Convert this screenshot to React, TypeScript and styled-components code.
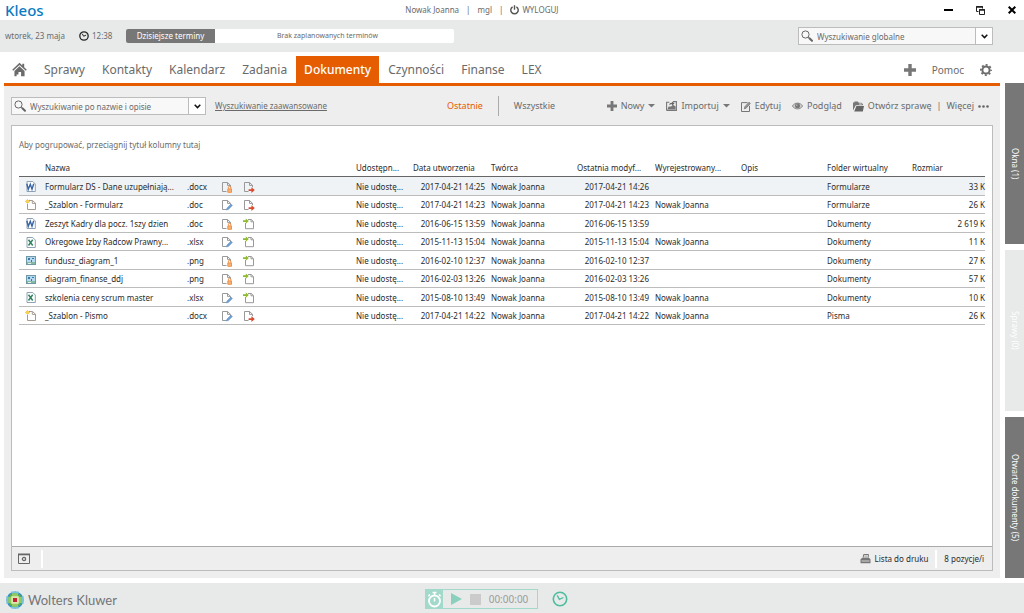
import React from "react";
import styled, { createGlobalStyle, css } from "styled-components";

const color = {
  orange: "#e65c00",
  grey: "#777",
  text: "#6a6a6a",
  ink: "#2b2b2b",
  strip: "#e8eaea",
  work: "#eeeeee",
  line: "#bcbcbc",
  teal: "#4dbd9e",
  tealSoft: "#a3d9ca",
};

const GlobalStyle = createGlobalStyle`
  *, *::before, *::after { box-sizing: border-box; }
  body { margin: 0; background: #fff; color: ${color.text}; font: 8px/12px "Noto Sans", "Open Sans", sans-serif; }
  button, input { font: inherit; color: inherit; }
  button { display: inline-flex; align-items: center; padding: 0; border: 0; background: none; white-space: nowrap; }
  a { color: inherit; text-decoration: none; }
  svg { display: block; flex: none; }
`;

const Page = styled.div`
  display: flex;
  flex-direction: column;
  min-height: 100vh;
`;

const TitleBar = styled.header`
  display: grid;
  grid-template-columns: 7fr auto 8fr;
  align-items: center;
  height: 20px;
  padding: 0 8px 0 5px;
`;

const Brand = styled.span`
  color: #0a7bc1;
  font-size: 15px;
  line-height: 20px;
  font-weight: 500;
`;

const UserInfo = styled.div`
  display: flex;
  align-items: center;
  gap: 7px;
  button { gap: 3px; }
`;

const WindowControls = styled.div`
  display: flex;
  justify-content: flex-end;
  align-items: center;
  gap: 23px;
  color: #000;
`;

const InfoStrip = styled.div`
  display: flex;
  align-items: center;
  height: 32px;
  padding: 0 31px 0 5px;
  background: ${color.strip};
`;

const Today = styled.span`
  width: 74px;
`;

const Clock = styled.span`
  display: flex;
  align-items: center;
  gap: 3px;
  width: 47px;
`;

const Agenda = styled.div`
  display: flex;
  height: 14px;
  line-height: 14px;
  border-radius: 2px;
  overflow: hidden;
  background: #fff;
`;

const AgendaTitle = styled.strong`
  width: 89px;
  background: ${color.grey};
  color: #fff;
  font-weight: 400;
  text-align: center;
`;

const AgendaText = styled.span`
  width: 239px;
  padding-right: 14px;
  font-size: 7px;
  text-align: center;
`;

const SearchBox = styled.div<{ $push?: boolean }>`
  display: flex;
  align-items: center;
  width: 195px;
  height: 18px;
  padding-left: 2px;
  border: 1px solid ${color.line};
  background: #f8f8f8;
  ${(p) => p.$push && css`margin-left: auto;`}

  input {
    flex: 1;
    min-width: 0;
    height: 16px;
    padding: 0 4px;
    border: 0;
    outline: 0;
    background: none;
  }
  input::placeholder { color: ${color.text}; opacity: 1; }
  button {
    justify-content: center;
    width: 17px;
    height: 16px;
    border-left: 1px solid ${color.line};
    background: #fff;
    color: #111;
  }
`;

const Body = styled.div`
  display: flex;
  flex: 1;
  gap: 5px;
  padding: 0 0 5px 4px;
`;

const Main = styled.main`
  display: flex;
  flex: 1;
  flex-direction: column;
  min-width: 0;
`;

const Nav = styled.nav`
  display: flex;
  align-items: flex-end;
  gap: 1px;
  height: 34px;
  padding-right: 8px;
  border-bottom: 3px solid ${color.orange};
`;

const NavLink = styled.a<{ $active?: boolean }>`
  display: flex;
  align-items: center;
  height: 27px;
  padding: 0 8px;
  font-size: 12px;
  line-height: 16px;
  ${(p) => p.$active && css`background: ${color.orange}; color: #fff; font-weight: 500;`}
`;

const NavTools = styled.div`
  display: flex;
  align-items: center;
  gap: 16px;
  height: 27px;
  margin-left: auto;
  font-size: 10px;
`;

const Work = styled.section`
  display: flex;
  flex: 1;
  flex-direction: column;
  padding: 11px 7px 7px;
  background: ${color.work};
`;

const Toolbar = styled.div`
  display: flex;
  align-items: center;
  height: 18px;
  margin-bottom: 10px;
  padding-right: 4px;
`;

const AdvancedLink = styled.a`
  width: 232px;
  margin-left: 9px;
  text-decoration: underline;
`;

const ViewButton = styled.button<{ $active?: boolean }>`
  font-size: 9px;
  ${(p) => p.$active && css`color: ${color.orange};`}
`;

const ViewDivider = styled.span`
  width: 1px;
  height: 20px;
  margin: 0 15px;
  background: #aaa;
`;

const Actions = styled.div`
  display: flex;
  align-items: center;
  gap: 11px;
  margin-left: auto;
  font-size: 9px;
  button { gap: 4px; }
`;

const CaseGroup = styled.div`
  display: flex;
  align-items: center;
  gap: 5px;
`;

const Panel = styled.div`
  display: flex;
  flex: 1;
  flex-direction: column;
  border: 1px solid ${color.line};
  background: #fff;
`;

const PanelBody = styled.div`
  flex: 1;
  padding: 0 7px;
`;

const GroupHint = styled.p`
  margin: 13px 0 8px;
`;

const Table = styled.table`
  width: 100%;
  border-collapse: separate;
  border-spacing: 0;
  table-layout: fixed;
  color: ${color.ink};
  font-size: 8px;
  line-height: 12px;
  white-space: nowrap;
`;

const HeadCell = styled.th`
  height: 18px;
  padding: 0 3px;
  border-bottom: 1px solid #666;
  font-weight: 400;
  text-align: left;
`;

const Row = styled.tr<{ $selected?: boolean }>`
  height: 19px;
  &:nth-child(even) { height: 18px; }
  ${(p) => p.$selected && css`background: #eff3f6;`}
`;

const Cell = styled.td<{ $align?: "right" | "center"; $flush?: boolean }>`
  padding: 1px ${(p) => (p.$flush ? 0 : 3)}px 0;
  border-bottom: 1px solid ${color.line};
  text-align: ${(p) => p.$align ?? "left"};
  svg { margin: 0 auto; }
`;

const PanelFoot = styled.footer`
  display: flex;
  align-items: center;
  height: 24px;
  padding: 0 8px 0 6px;
  border-top: 1px solid #aaa;
  background: ${color.work};
  color: ${color.ink};
`;

const ViewSettings = styled.button`
  padding-right: 4px;
`;

const FootDivider = styled.span`
  width: 2px;
  height: 18px;
  margin: 0 7px;
  background: #fff;
`;

const PrintButton = styled.button`
  gap: 4px;
  margin-left: auto;
`;

const Rail = styled.aside`
  display: flex;
  flex-direction: column;
  gap: 6px;
  width: 19px;
  margin-top: 31px;
`;

const RailTab = styled.button`
  flex: 1;
  justify-content: center;
  background: ${color.grey};
  color: #fff;
  writing-mode: vertical-rl;
  &:disabled { background: ${color.strip}; color: #fff; }
`;

const BottomBar = styled.footer`
  display: grid;
  grid-template-columns: 1fr auto 1fr;
  align-items: center;
  height: 30px;
  padding: 0 37px 0 6px;
  background: ${color.strip};
`;

const Company = styled.div`
  display: flex;
  align-items: center;
  gap: 4px;
  padding-top: 3px;
  font: 13px/18px Lato, "Open Sans", sans-serif;
  color: #737577;
`;

const TimerArea = styled.div`
  display: flex;
  align-items: center;
  gap: 14px;
  padding-top: 2px;
`;

const Timer = styled.div`
  display: flex;
  align-items: center;
  gap: 8px;
  height: 20px;
  padding-right: 9px;
  border: 1px solid ${color.tealSoft};
  color: #9b9b9b;
  font-size: 10px;
`;

const TimerBadge = styled.span`
  display: grid;
  place-items: center;
  width: 17px;
  height: 18px;
  background: ${color.tealSoft};
`;

const Plus = ({ size }: { size: number }) => (
  <svg width={size} height={size} viewBox="0 0 12 12" fill={color.grey}>
    <path d="M4.3 0h3.4v4.3H12v3.4H7.7V12H4.3V7.7H0V4.3h4.3z" />
  </svg>
);

const Magnifier = () => (
  <svg width="12" height="12" viewBox="0 0 12 12" fill="none" stroke="#666">
    <circle cx="4.5" cy="4.5" r="3.6" />
    <path d="M7.3 7.3l1.2 1.2" />
    <path d="M8.4 8.2l2.6 2.6" strokeWidth="2" strokeLinecap="round" />
  </svg>
);

const Chevron = () => (
  <svg width="7" height="5" viewBox="0 0 7 5" fill="none" stroke="currentColor" strokeWidth="1.5">
    <path d="M.7.8l2.8 2.8L6.3.8" />
  </svg>
);

const Caret = () => (
  <svg width="7" height="4" viewBox="0 0 7 4" fill={color.grey}>
    <path d="M0 0h7L3.5 3.6z" />
  </svg>
);

const Power = () => (
  <svg width="9" height="10" viewBox="0 0 9 10" fill="none" stroke="#555" strokeWidth="1.4">
    <path d="M2.6 1.9a3.7 3.7 0 1 0 3.8 0M4.5.2v4.6" />
  </svg>
);

const ClockIcon = ({ size, tint, width = 1.3 }: { size: number; tint: string; width?: number }) => (
  <svg width={size} height={size} viewBox="0 0 16 16" fill="none" stroke={tint} strokeWidth={(width * 16) / size}>
    <circle cx="8" cy="8" r="6.7" />
    <path d="M5.2 4.4L7.4 8.4l4-1.9" strokeWidth={((width - 0.3) * 16) / size} />
  </svg>
);

const House = () => (
  <svg width="15" height="15" viewBox="0 0 16 15" fill="#6b6b6b">
    <path d="M8 .4l3 2.8V1.3h2v3.8l2.8 2.6-1.1 1.2L8 2.7 1.3 8.9.2 7.7z" />
    <path d="M8 4l5.4 5v5.8H9.7v-4.6H6.9v2.5h-2v2.1H2.6V9z" />
  </svg>
);

const Gear = () => (
  <svg width="12" height="12" viewBox="0 0 12 12" fill="none" stroke="#6b6b6b">
    <circle cx="6" cy="6" r="3.6" strokeWidth="2" />
    <circle cx="6" cy="6" r="5.1" strokeWidth="1.7" strokeDasharray="2 2.005" strokeDashoffset="1" />
  </svg>
);

const ImportIcon = () => (
  <svg width="11" height="10" viewBox="0 0 11 10">
    <path d="M.6 9.4V1.2h2.8M7 .6h3.4v8.8H.6" fill="none" stroke="#777" strokeWidth="1.1" />
    <path d="M1.4 8.6h8.2V5.4L7 3.7 5 5.5H2.6z" fill="#777" />
    <path d="M3.2 4.3C3.3 2.3 4.3 1.6 6 1.7V.4L8.6 2.6 6 4.5V3.3c-1.2 0-2 .2-2.8 1z" fill="#666" />
  </svg>
);

const EditIcon = () => (
  <svg width="10" height="11" viewBox="0 0 10 11" fill="none" stroke="#777">
    <path d="M6.5 1.6H.5v8.9h8V4.8" />
    <path d="M3.3 7.8l.5-2L8 1.2l1.3 1.2-4.2 4.8z" fill="#999" strokeWidth=".8" />
  </svg>
);

const EyeIcon = () => (
  <svg width="11" height="8" viewBox="0 0 11 8">
    <path d="M.4 4C2.6.1 8.4.1 10.6 4 8.4 7.9 2.6 7.9.4 4z" fill="#ccc" stroke="#888" strokeWidth=".9" />
    <circle cx="5.5" cy="3.8" r="2.5" fill="#777" />
    <circle cx="4.8" cy="3.1" r=".7" fill="#ddd" />
  </svg>
);

const FolderIcon = () => (
  <svg width="11" height="11" viewBox="0 0 11 11" fill="#777">
    <path d="M0 9.4V1.6h1.4V.6h3.4l1 1.2h2.6L10 3.2v1.1H2.8z" />
    <path d="M3.4 4.9H11L9.8 10.6H1.2z" fill="#666" />
    <path d="M6.2 2.6h2l.8.9H6.2z" fill="#eee" />
  </svg>
);

const Dots = () => (
  <svg width="11" height="3" viewBox="0 0 11 3" fill="#666">
    <circle cx="1.5" cy="1.5" r="1.3" />
    <circle cx="5.5" cy="1.5" r="1.3" />
    <circle cx="9.5" cy="1.5" r="1.3" />
  </svg>
);

type FileKind = "word" | "excel" | "image" | "template";

const FileIcon = ({ kind }: { kind: FileKind }) => {
  if (kind === "image")
    return (
      <svg width="10" height="9" viewBox="0 0 10 9">
        <path d="M0 0h10v9H0z" fill="#6f97a5" />
        <path d="M1 1h8v5H1z" fill="#b4d8f0" />
        <path d="M2 2h2v2H2zM6 2h2v1H6zM5 4h1v2H5z" fill="#3d78a5" />
        <path d="M1 6h8v2H1z" fill="#84b9a6" />
        <path d="M2 7h3v1H2z" fill="#e9f3df" />
      </svg>
    );
  if (kind === "template")
    return (
      <svg width="12" height="12" viewBox="0 0 12 12" fill="none">
        <path d="M2.5 1.5h5l3 2.7v6.3h-8z" fill="#fff" stroke="#a59b93" />
        <path d="M7.3 1.5v2.9h3.2" stroke="#a59b93" />
        <path d="M2.5 0v5M0 2.5h5M.8.8l3.4 3.4M4.2.8L.8 4.2" stroke="#f5cf5a" />
      </svg>
    );
  const tint = kind === "word" ? "#3a64a8" : "#2f8560";
  return (
    <svg width="10" height="11" viewBox="0 0 10 11" fill="none" stroke={tint}>
      <path d="M1 .5h5.8L9.3 3v7.5H1z" fill="#fff" stroke="#8597ad" strokeWidth=".9" />
      {kind === "word" ? (
        <path d="M.8 2.8l1.5 5.5 2-5 1.7 5 1.7-5.5" strokeWidth="1.4" />
      ) : (
        <path d="M2.5 2.7l4.2 5.8M6.7 2.7L2.5 8.5" strokeWidth="1.5" />
      )}
    </svg>
  );
};

type Mark = "lock" | "pencil" | "out" | "in";

const MarkIcon = ({ mark }: { mark: Mark }) => (
  <svg width="12" height="12" viewBox="0 0 12 12" fill="none">
    {mark === "in" ? (
      <path d="M5 1.5h3.3l2.2 2.2v7h-8V5M8 1.5v2.3h2.5" stroke="#999" />
    ) : (
      <path d="M5.5 10.5h-4v-9h5l3 2.8v2M6.5 1.5v2.9h3" stroke="#999" />
    )}
    {mark === "lock" && (
      <g stroke="#ed8a3a">
        <path d="M7.4 7.6V6.2c0-1.3 2.4-1.3 2.4 0v1.4" />
        <path d="M6.8 7.9h3.7v3.4H6.8z" fill="#f7b27c" strokeWidth=".9" />
      </g>
    )}
    {mark === "pencil" && <path d="M5.3 11l.7-2 4-3.9 1.4 1.4-4 3.9z" fill="#6f9fd2" stroke="#5b8cc2" strokeWidth=".5" />}
    {mark === "out" && <path d="M5.6 8.3h2.8V6.2l3.4 2.9L8.400 12V9.900H5.600z" fill="#d84b2e" />}
    {mark === "in" && <path d="M0 2.3h2.8V.4l3 2.700-3 2.700V3.900H0z" fill="#8fb92f" />}
  </svg>
);

const PanelIcon = () => (
  <svg width="12" height="11" viewBox="0 0 12 11" fill="none" stroke="#666">
    <path d="M.5 1.5h11v9H.5z" />
    <path d="M0 1.4h12" strokeWidth="1.8" />
    <circle cx="6" cy="6" r="1.6" strokeWidth="1.3" />
  </svg>
);

const PrinterIcon = () => (
  <svg width="11" height="10" viewBox="0 0 11 10">
    <path d="M3 4.3L3.7.5h4.8L8 4.3" fill="#eee" stroke="#777" />
    <path d="M4.3 2h3M4.1 3.3h3" stroke="#777" strokeWidth=".6" />
    <path d="M.5 5.3L2 4h7.3l1.2 1.3v3.9H.5z" fill="#777" />
    <path d="M1.5 7h8" stroke="#eee" strokeWidth=".8" />
  </svg>
);

const Globe = () => (
  <svg width="18" height="18" viewBox="0 0 18 18">
    <circle cx="9" cy="9" r="8.6" fill="#2b87c8" />
    <path d="M5 1.4h8M5 16.6h8M1.4 5v8M16.6 5v8" stroke="#75c4d9" strokeWidth="2" />
    <path d="M3.5 3.5h11v11h-11z" fill="#64b547" />
    <path d="M6 2.2h6v13.6H6zM2.2 6h13.6v6H2.2z" fill="#93cb62" />
    <path d="M5.2 5.2h7.6v7.6H5.2z" fill="#d9e8a8" />
    <path d="M7 7h4v4H7z" fill="#c4213b" />
  </svg>
);

const Stopwatch = () => (
  <svg width="15" height="17" viewBox="0 0 15 17" fill="none" stroke="#fff">
    <circle cx="7.5" cy="10" r="5.5" strokeWidth="1.8" />
    <path d="M5.5 1.5h4M7.5 1.5V4M7.5 7v3.6M12 3.5l1.6 1.6M3 3.5L1.4 5.1" strokeWidth="1.5" />
  </svg>
);

type Doc = {
  kind: FileKind;
  name: string;
  ext: string;
  marks: [Mark, Mark];
  created: string;
  modified: string;
  checkedOut?: boolean;
  folder: string;
  size: string;
};

const docs: Doc[] = [
  { kind: "word", name: "Formularz DS - Dane uzupełniają...", ext: ".docx", marks: ["lock", "out"], created: "2017-04-21 14:25", modified: "2017-04-21 14:26", folder: "Formularze", size: "33 K" },
  { kind: "template", name: "_Szablon - Formularz", ext: ".doc", marks: ["pencil", "out"], created: "2017-04-21 14:23", modified: "2017-04-21 14:23", checkedOut: true, folder: "Formularze", size: "26 K" },
  { kind: "word", name: "Zeszyt Kadry dla pocz. 1szy dzien", ext: ".doc", marks: ["lock", "in"], created: "2016-06-15 13:59", modified: "2016-06-15 13:59", folder: "Dokumenty", size: "2 619 K" },
  { kind: "excel", name: "Okregowe Izby Radcow Prawny...", ext: ".xlsx", marks: ["pencil", "in"], created: "2015-11-13 15:04", modified: "2015-11-13 15:04", checkedOut: true, folder: "Dokumenty", size: "11 K" },
  { kind: "image", name: "fundusz_diagram_1", ext: ".png", marks: ["lock", "in"], created: "2016-02-10 12:37", modified: "2016-02-10 12:37", folder: "Dokumenty", size: "27 K" },
  { kind: "image", name: "diagram_finanse_ddj", ext: ".png", marks: ["lock", "in"], created: "2016-02-03 13:26", modified: "2016-02-03 13:26", folder: "Dokumenty", size: "57 K" },
  { kind: "excel", name: "szkolenia ceny scrum master", ext: ".xlsx", marks: ["pencil", "in"], created: "2015-08-10 13:49", modified: "2015-08-10 13:49", checkedOut: true, folder: "Dokumenty", size: "10 K" },
  { kind: "template", name: "_Szablon - Pismo", ext: ".docx", marks: ["pencil", "out"], created: "2017-04-21 14:22", modified: "2017-04-21 14:22", checkedOut: true, folder: "Pisma", size: "26 K" },
];

const columns: { label: string; width?: number }[] = [
  { label: "", width: 23 },
  { label: "Nazwa", width: 142 },
  { label: "", width: 32 },
  { label: "", width: 22 },
  { label: "", width: 22 },
  { label: "" },
  { label: "Udostępn...", width: 57 },
  { label: "Data utworzenia", width: 78 },
  { label: "Twórca", width: 86 },
  { label: "Ostatnia modyf...", width: 78 },
  { label: "Wyrejestrowany...", width: 86 },
  { label: "Opis", width: 86 },
  { label: "Folder wirtualny", width: 85 },
  { label: "Rozmiar", width: 76 },
];

const Col = styled.col<{ $width?: number }>`
  width: ${(p) => (p.$width ? `${p.$width}px` : "auto")};
`;

const Search = ({ label, push }: { label: string; push?: boolean }) => (
  <SearchBox $push={push}>
    <Magnifier />
    <input type="text" aria-label={label} placeholder={label} />
    <button type="button" aria-label={`${label} – opcje`}>
      <Chevron />
    </button>
  </SearchBox>
);

const sections = ["Sprawy", "Kontakty", "Kalendarz", "Zadania", "Dokumenty", "Czynności", "Finanse", "LEX"];

export default function App() {
  return (
    <Page>
      <GlobalStyle />
      <TitleBar>
        <Brand>Kleos</Brand>
        <UserInfo>
          <span>Nowak Joanna</span>
          <span>|</span>
          <span>mgl</span>
          <span>|</span>
          <button type="button">
            <Power />
            WYLOGUJ
          </button>
        </UserInfo>
        <WindowControls>
          <button type="button" aria-label="Minimalizuj">
            <svg width="9" height="2" viewBox="0 0 9 2"><path d="M0 0h9v2H0z" /></svg>
          </button>
          <button type="button" aria-label="Przywróć">
            <svg width="9" height="9" viewBox="0 0 9 9" fill="none" stroke="#222">
              <path d="M2.5 5.5h-2v-5h6v2" />
              <path d="M0 1h7M3 4h6" strokeWidth="1.4" />
              <path d="M3.5 3.5h5v5h-5z" />
            </svg>
          </button>
          <button type="button" aria-label="Zamknij">
            <svg width="8" height="8" viewBox="0 0 8 8" stroke="#000" strokeWidth="2"><path d="M.7.7l6.6 6.6M7.3.7L.7 7.3" /></svg>
          </button>
        </WindowControls>
      </TitleBar>

      <InfoStrip>
        <Today>wtorek, 23 maja</Today>
        <Clock>
          <ClockIcon size={10} tint="#222" />
          12:38
        </Clock>
        <Agenda>
          <AgendaTitle>Dzisiejsze terminy</AgendaTitle>
          <AgendaText>Brak zaplanowanych terminów</AgendaText>
        </Agenda>
        <Search label="Wyszukiwanie globalne" push />
      </InfoStrip>

      <Body>
        <Main>
          <Nav>
            <NavLink href="#start" aria-label="Start"><House /></NavLink>
            {sections.map((s) => (
              <NavLink key={s} href={`#${s}`} $active={s === "Dokumenty"}>{s}</NavLink>
            ))}
            <NavTools>
              <button type="button" aria-label="Dodaj"><Plus size={12} /></button>
              <a href="#pomoc">Pomoc</a>
              <button type="button" aria-label="Ustawienia"><Gear /></button>
            </NavTools>
          </Nav>

          <Work>
            <Toolbar>
              <Search label="Wyszukiwanie po nazwie i opisie" />
              <AdvancedLink href="#zaawansowane">Wyszukiwanie zaawansowane</AdvancedLink>
              <ViewButton type="button" $active>Ostatnie</ViewButton>
              <ViewDivider />
              <ViewButton type="button">Wszystkie</ViewButton>
              <Actions>
                <button type="button"><Plus size={10} />Nowy<Caret /></button>
                <button type="button"><ImportIcon />Importuj<Caret /></button>
                <button type="button"><EditIcon />Edytuj</button>
                <button type="button"><EyeIcon />Podgląd</button>
                <CaseGroup>
                  <button type="button"><FolderIcon />Otwórz sprawę</button>
                  <span>|</span>
                  <button type="button">Więcej<Dots /></button>
                </CaseGroup>
              </Actions>
            </Toolbar>

            <Panel>
              <PanelBody>
                <GroupHint>Aby pogrupować, przeciągnij tytuł kolumny tutaj</GroupHint>
                <Table>
                  <colgroup>
                    {columns.map((c, i) => <Col key={i} $width={c.width} />)}
                  </colgroup>
                  <thead>
                    <tr>
                      {columns.map((c, i) => <HeadCell key={i} scope="col">{c.label}</HeadCell>)}
                    </tr>
                  </thead>
                  <tbody>
                    {docs.map((d, i) => (
                      <Row key={d.name} $selected={i === 0}>
                        <Cell $flush><FileIcon kind={d.kind} /></Cell>
                        <Cell>{d.name}</Cell>
                        <Cell>{d.ext}</Cell>
                        <Cell $flush><MarkIcon mark={d.marks[0]} /></Cell>
                        <Cell $flush><MarkIcon mark={d.marks[1]} /></Cell>
                        <Cell />
                        <Cell>Nie udostę...</Cell>
                        <Cell $align="right">{d.created}</Cell>
                        <Cell>Nowak Joanna</Cell>
                        <Cell $align="right">{d.modified}</Cell>
                        <Cell>{d.checkedOut ? "Nowak Joanna" : ""}</Cell>
                        <Cell />
                        <Cell>{d.folder}</Cell>
                        <Cell $align="right" $flush>{d.size}</Cell>
                      </Row>
                    ))}
                  </tbody>
                </Table>
              </PanelBody>
              <PanelFoot>
                <ViewSettings type="button" aria-label="Ustawienia widoku"><PanelIcon /></ViewSettings>
                <FootDivider />
                <PrintButton type="button"><PrinterIcon />Lista do druku</PrintButton>
                <FootDivider />
                <span>8 pozycje/i</span>
              </PanelFoot>
            </Panel>
          </Work>
        </Main>

        <Rail>
          <RailTab type="button">Okna (1)</RailTab>
          <RailTab type="button" disabled>Sprawy (0)</RailTab>
          <RailTab type="button">Otwarte dokumenty (5)</RailTab>
        </Rail>
      </Body>

      <BottomBar>
        <Company><Globe />Wolters Kluwer</Company>
        <TimerArea>
          <Timer>
            <TimerBadge><Stopwatch /></TimerBadge>
            <button type="button" aria-label="Uruchom">
              <svg width="11" height="12" viewBox="0 0 11 12" fill="#8ad0bc"><path d="M0 0l11 6L0 12z" /></svg>
            </button>
            <button type="button" aria-label="Zatrzymaj">
              <svg width="11" height="11" viewBox="0 0 11 11" fill="#cbcbcb"><path d="M0 0h11v11H0z" /></svg>
            </button>
            <span>00:00:00</span>
          </Timer>
          <ClockIcon size={16} tint={color.teal} width={1.6} />
        </TimerArea>
      </BottomBar>
    </Page>
  );
}
